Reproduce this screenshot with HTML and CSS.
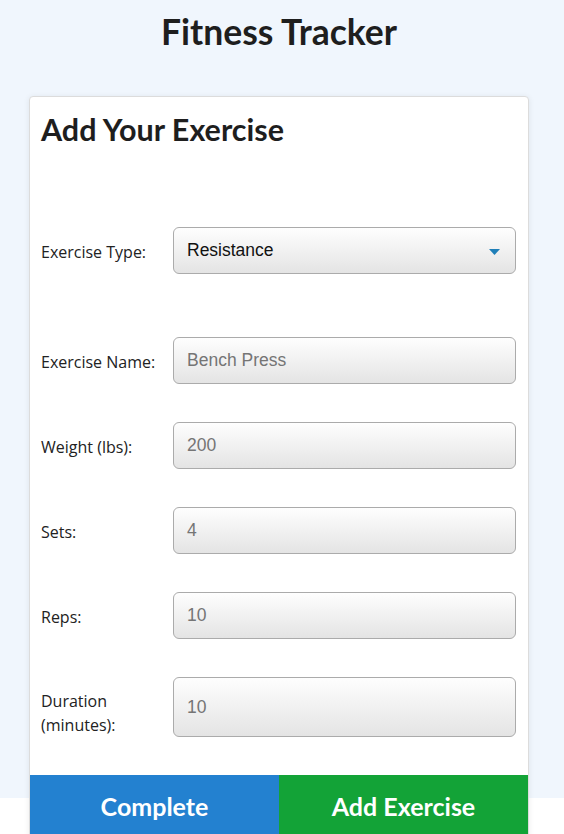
FILE: index.html
```html
<!DOCTYPE html>
<html lang="en">
<head>
<meta charset="utf-8">
<title>Fitness Tracker</title>
<link rel="stylesheet" href="styles.css">
</head>
<body>
<div class="container">
  <h1 class="title">Fitness Tracker</h1>
  <div class="card">
    <h2 class="card-title">Add Your Exercise</h2>
    <form class="form">
      <div class="row row-type">
        <label class="label">Exercise Type:</label>
        <div class="field select">
          <span class="value">Resistance</span>
          <svg class="caret" width="11" height="6" viewBox="0 0 11 6"><path d="M0 0H11L5.5 6Z" fill="#1f7fb8"/></svg>
        </div>
      </div>
      <div class="row">
        <label class="label">Exercise Name:</label>
        <div class="field"><span class="ph">Bench Press</span></div>
      </div>
      <div class="row">
        <label class="label">Weight (lbs):</label>
        <div class="field"><span class="ph">200</span></div>
      </div>
      <div class="row">
        <label class="label">Sets:</label>
        <div class="field"><span class="ph">4</span></div>
      </div>
      <div class="row">
        <label class="label">Reps:</label>
        <div class="field"><span class="ph">10</span></div>
      </div>
      <div class="row">
        <label class="label label-2">Duration<br>(minutes):</label>
        <div class="field tall"><span class="ph">10</span></div>
      </div>
    </form>
    <div class="actions">
      <button class="btn btn-blue" type="button">Complete</button>
      <button class="btn btn-green" type="button">Add Exercise</button>
    </div>
  </div>
</div>
</body>
</html>
```
FILE: styles.css
```css
html {
  margin: 0;
  padding: 0;
  min-height: 100%;
  background: linear-gradient(#f0f6fd 0, #f0f6fd 798px, #ffffff 798px) no-repeat;
  background-color: #ffffff;
}
body {
  margin: 0;
  padding: 0;
}
.container {
  width: 558px;
}
.title {
  margin: 0;
  padding-top: 9px;
  line-height: 46px;
  font-family: Lato, "Liberation Sans", sans-serif;
  font-weight: 700;
  font-size: 35.5px;
  color: #1e1e1e;
  text-align: center;
}
.card {
  margin: 41px auto 0;
  width: 500px;
  box-sizing: border-box;
  background: #fff;
  border: 1px solid #dcdcdc;
  border-radius: 4px;
  box-shadow: 0 1px 6px rgba(0,0,0,0.08);
  overflow: hidden;
}
.card-title {
  margin: 0;
  padding: 13px 11px 0;
  line-height: 38px;
  font-family: Lato, "Liberation Sans", sans-serif;
  font-weight: 700;
  font-size: 30.5px;
  color: #1e1e1e;
}
.form {
  padding: 79px 12px 0;
  display: flex;
  flex-direction: column;
  gap: 38px;
}
.row {
  display: grid;
  grid-template-columns: 131px 1fr;
  align-items: center;
}
.row-type {
  margin-bottom: 25px;
}
.label {
  font-family: "Open Sans", "Noto Sans", sans-serif;
  font-size: 16px;
  color: #222;
  line-height: 24px;
  margin-left: -1px;
  padding-top: 2px;
}
.label-2 {
  padding-top: 12px;
}
.field {
  height: 47px;
  box-sizing: border-box;
  border: 1px solid #ababab;
  border-radius: 6px;
  background: linear-gradient(#fefefe, #e4e4e4);
  display: flex;
  align-items: center;
  padding: 0 13px;
  font-family: "Liberation Sans", Arial, sans-serif;
  font-size: 17.5px;
}
.field.tall {
  height: 60px;
}
.select {
  justify-content: space-between;
}
.value {
  color: #111;
}
.ph {
  color: #757575;
}
.caret {
  margin-right: 2px;
  margin-top: 2px;
}
.actions {
  margin-top: 38px;
  display: flex;
}
.btn {
  flex: 1;
  height: 64px;
  border: 0;
  margin: 0;
  padding: 0 0 2px;
  font-family: Lato, "Liberation Sans", sans-serif;
  font-weight: 700;
  font-size: 25px;
  color: #fff;
}
.btn-blue {
  background: #2381d0;
}
.btn-green {
  background: #13a337;
}
```
